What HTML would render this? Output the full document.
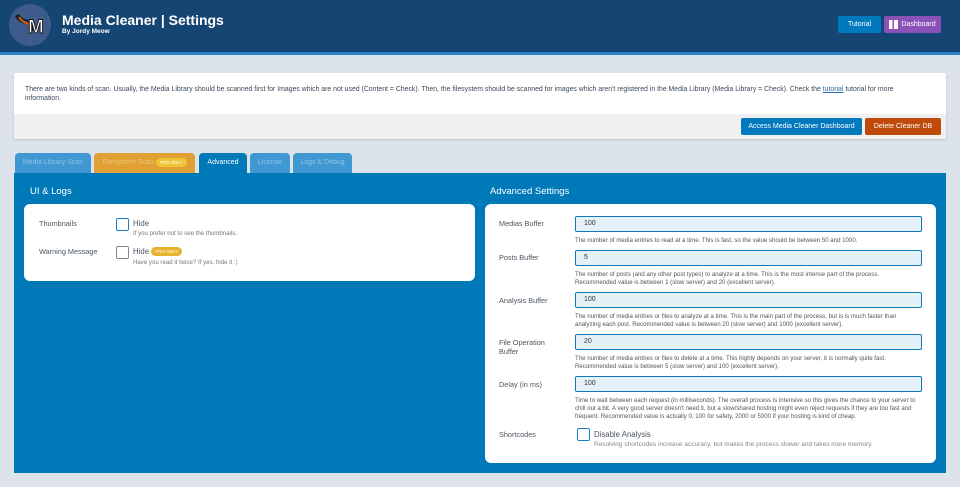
<!DOCTYPE html>
<html><head><meta charset="utf-8"><style>
*{box-sizing:border-box;margin:0;padding:0}
body{width:960px;height:487px;background:#dce3ea;font-family:"Liberation Sans",sans-serif;position:relative;overflow:hidden;color:#3b4a5a}
.abs{position:absolute}
.hdr{left:0;top:0;width:960px;background:#154673;border-bottom:3px solid #2a82c4;height:55px}
.btn{position:absolute;color:#fff;font-size:7px;text-align:center;border-radius:2px;height:17px;line-height:17px}
.tab{position:absolute;top:153px;height:20px;border-radius:4px 4px 0 0;font-size:7px;line-height:20px;text-align:center;color:#8ec3e6}
.card{position:absolute;background:#fff;border-radius:6px}
.lbl{position:absolute;font-size:7.3px;color:#4a5560}
.inp{position:absolute;left:575px;width:347px;height:16px;background:#e5f1f8;border:1px solid #0f78b8;border-radius:2px;font-size:7px;line-height:14px;padding-left:8px;color:#333}
.desc{position:absolute;left:575px;font-size:6.1px;color:#555;line-height:8px;width:345px}
.cb{position:absolute;width:13px;height:13px;border:1.5px solid #1c7cc0;border-radius:2px;background:#fff}
.pro{display:inline-block;background:#e6b32e;color:#fff;font-size:4.5px;border-radius:6px;padding:0 4px;line-height:9px;vertical-align:middle}
</style></head><body>
<div class="abs hdr"></div>
<div class="abs" style="left:9px;top:4px;width:42px;height:42px;border-radius:50%;background:#3d5b8b"></div>
<svg class="abs" style="left:14px;top:10px" width="34" height="26" viewBox="0 0 34 26"><path d="M3 5 Q6 11 13 12 Q17 14 18 21" stroke="#1a1a1a" stroke-width="4.5" fill="none"/><path d="M5 7 Q8 12 13 13 Q16 15 17 20" stroke="#c05a20" stroke-width="2.2" fill="none"/><text x="14" y="23" font-family="Liberation Sans" font-weight="bold" font-size="19" fill="#fff" stroke="#111" stroke-width="0.9">M</text></svg>
<div class="abs" style="left:62px;top:12px;font-size:14px;font-weight:bold;color:#fff">Media Cleaner | Settings</div>
<div class="abs" style="left:62px;top:28px;font-size:6.5px;font-weight:bold;color:#fff">By Jordy Meow</div>
<div class="btn" style="left:838px;top:16px;width:43px;background:#0079bd">Tutorial</div>
<div class="btn" style="left:884px;top:16px;width:57px;background:#8a52b8;padding-left:12px"><span style="position:absolute;left:5px;top:4px;width:9px;height:9px;background:linear-gradient(90deg,#fff 40%,transparent 40%,transparent 55%,#fff 55%)"></span>Dashboard</div>

<div class="abs" style="left:14px;top:73px;width:932px;height:66px;background:#fff;box-shadow:0 1px 2px rgba(0,0,0,.15)">
<div style="padding:12px 11px 0;font-size:6.9px;line-height:9px;color:#3b4a5a;height:41px;width:900px">There are two kinds of scan. Usually, the Media Library should be scanned first for Images which are not used (Content = Check). Then, the filesystem should be scanned for images which aren't registered in the Media Library (Media Library = Check). Check the <u style="color:#2a6aa8">tutorial</u> tutorial for more information.</div>
<div style="background:#f0f0f0;height:25px"></div></div>
<div class="btn" style="left:741px;top:118px;width:121px;background:#0079bd">Access Media Cleaner Dashboard</div>
<div class="btn" style="left:865px;top:118px;width:76px;background:#bf4a0a">Delete Cleaner DB</div>

<div class="tab" style="left:15px;width:76px;background:#3f98d2">Media Library Scan</div>
<div class="tab" style="left:94px;width:101px;background:#e0a034;color:#f1c777">Filesystem Scan <span class="pro" style="background:#efc437">PRO ONLY</span></div>
<div class="tab" style="left:199px;width:48px;background:#0079b8;color:#fff">Advanced</div>
<div class="tab" style="left:250px;width:40px;background:#3f98d2">License</div>
<div class="tab" style="left:293px;width:59px;background:#3f98d2">Logs &amp; Debug</div>

<div class="abs" style="left:14px;top:173px;width:932px;height:300px;background:#0079b8"></div>
<div class="abs" style="left:30px;top:186px;font-size:9.5px;color:#fff">UI &amp; Logs</div>
<div class="abs" style="left:490px;top:186px;font-size:9.5px;color:#fff">Advanced Settings</div>

<div class="card" style="left:24px;top:204px;width:451px;height:77px"></div>
<div class="lbl" style="left:39px;top:219px">Thumbnails</div>
<div class="cb" style="left:116px;top:218px"></div>
<div class="lbl" style="left:133px;top:219px;font-size:7.8px">Hide</div>
<div class="desc" style="left:133px;top:230px;color:#777">If you prefer not to see the thumbnails.</div>
<div class="lbl" style="left:39px;top:247px">Warning Message</div>
<div class="cb" style="left:116px;top:246px;border-color:#888"></div>
<div class="lbl" style="left:133px;top:247px;font-size:7.8px">Hide <span class="pro">PRO ONLY</span></div>
<div class="desc" style="left:133px;top:259px;color:#777">Have you read it twice? If yes, hide it :)</div>

<div class="card" style="left:485px;top:204px;width:451px;height:259px"></div>
<div class="lbl" style="left:499px;top:219px">Medias Buffer</div>
<div class="inp" style="top:216px">100</div>
<div class="desc" style="top:237px">The number of media entries to read at a time. This is fast, so the value should be between 50 and 1000.</div>
<div class="lbl" style="left:499px;top:253px">Posts Buffer</div>
<div class="inp" style="top:250px">5</div>
<div class="desc" style="top:271px">The number of posts (and any other post types) to analyze at a time. This is the most intense part of the process. Recommended value is between 1 (slow server) and 20 (excellent server).</div>
<div class="lbl" style="left:499px;top:296px">Analysis Buffer</div>
<div class="inp" style="top:292px">100</div>
<div class="desc" style="top:313px">The number of media entries or files to analyze at a time. This is the main part of the process, but is is much faster than analyzing each post. Recommended value is between 20 (slow server) and 1000 (excellent server).</div>
<div class="lbl" style="left:499px;top:338px;line-height:9px">File Operation<br>Buffer</div>
<div class="inp" style="top:334px">20</div>
<div class="desc" style="top:355px">The number of media entries or files to delete at a time. This highly depends on your server, it is normally quite fast. Recommended value is between 5 (slow server) and 100 (excellent server).</div>
<div class="lbl" style="left:499px;top:380px">Delay (in ms)</div>
<div class="inp" style="top:376px">100</div>
<div class="desc" style="top:397px">Time to wait between each request (in milliseconds). The overall process is intensive so this gives the chance to your server to chill out a bit. A very good server doesn't need it, but a slow/shared hosting might even reject requests if they are too fast and frequent. Recommended value is actually 0, 100 for safety, 2000 or 5000 if your hosting is kind of cheap.</div>
<div class="lbl" style="left:499px;top:430px">Shortcodes</div>
<div class="cb" style="left:577px;top:428px"></div>
<div class="lbl" style="left:594px;top:430px;font-size:7.8px">Disable Analysis</div>
<div class="desc" style="left:594px;top:441px;color:#888;font-size:6.5px;width:330px">Resolving shortcodes increase accuracy, but makes the process slower and takes more memory.</div>
</body></html>
